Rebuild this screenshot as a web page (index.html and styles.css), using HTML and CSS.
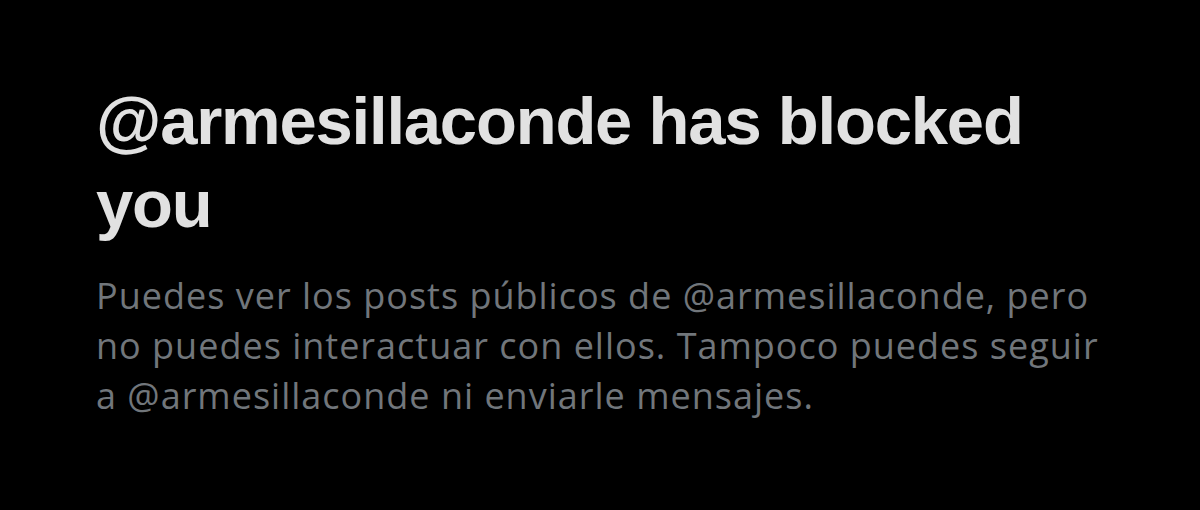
FILE: index.html
```html
<!DOCTYPE html>
<html lang="es">
<head>
<meta charset="utf-8">
<link rel="stylesheet" href="styles.css">
</head>
<body>
<main class="notice">
  <h1 class="notice-title">@armesillaconde has blocked you</h1>
  <p class="notice-text">Puedes ver los posts públicos de @armesillaconde, pero no puedes interactuar con ellos. Tampoco puedes seguir a @armesillaconde ni enviarle mensajes.</p>
</main>
</body>
</html>
```
FILE: styles.css
```css
html, body {
  margin: 0;
  background: #000;
  height: 100%;
}
.notice {
  padding: 79px 0 0 96px;
  width: 1015px;
}
.notice-title {
  margin: 0;
  font-family: "Liberation Sans", Arial, sans-serif;
  font-size: 67px;
  line-height: 83px;
  font-weight: 700;
  letter-spacing: -1.2px;
  color: #e1e1e1;
}
.notice-text {
  margin: 26px 0 0 0;
  font-family: "Open Sans", "Liberation Sans", sans-serif;
  font-size: 36px;
  line-height: 50px;
  letter-spacing: 1px;
  color: #71767b;
}
```
